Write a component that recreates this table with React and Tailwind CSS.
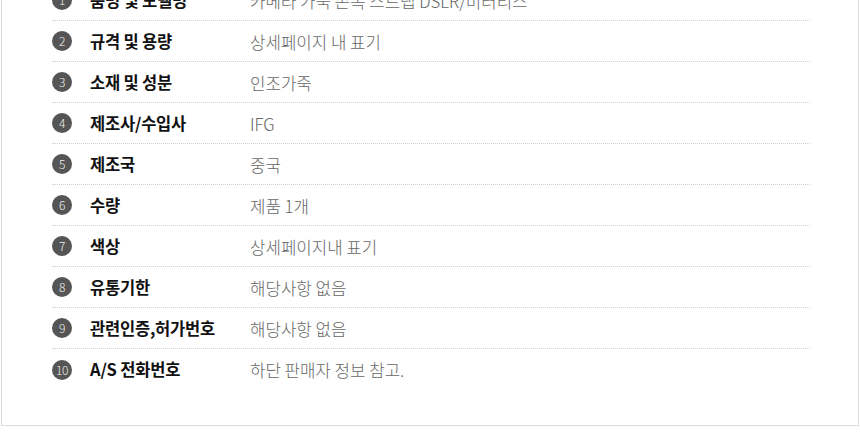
const rows = [
  ['품명 및 모델명', '카메라 가죽 손목 스트랩 DSLR/미러리스'],
  ['규격 및 용량', '상세페이지 내 표기'],
  ['소재 및 성분', '인조가죽'],
  ['제조사/수입사', 'IFG'],
  ['제조국', '중국'],
  ['수량', '제품 1개'],
  ['색상', '상세페이지내 표기'],
  ['유통기한', '해당사항 없음'],
  ['관련인증,허가번호', '해당사항 없음'],
  ['A/S 전화번호', '하단 판매자 정보 참고.'],
];

export default function App() {
  return (
    <div className="w-[860px] h-[443px] overflow-hidden bg-white font-['Noto_Sans_CJK_KR','Noto_Sans',sans-serif]">
      <div className="ml-[1px] w-[858px] mt-[-60px] border border-[#dcdcdc] pt-[39px] pb-[35px]">
        <ul className="ml-[50px] w-[758px]">
          {rows.map(([label, value], i) => (
            <li
              key={i}
              className={`flex items-center h-[41px] ${i < rows.length - 1 ? 'border-b border-dotted border-[#cfcfcf]' : ''}`}
            >
              <span className="w-[20px] h-[20px] rounded-full bg-[#555] text-[#f0f0f0] text-[12px] leading-none flex items-center justify-center font-light tracking-[-0.5px]">
                {i + 1}
              </span>
              <span className="ml-[18px] w-[160px] text-[16.5px] font-bold text-[#111] tracking-[-0.2px]">
                {label}
              </span>
              <span className="mt-[3px] text-[16.8px] font-light text-[#666]">
                {value}
              </span>
            </li>
          ))}
        </ul>
      </div>
    </div>
  );
}
